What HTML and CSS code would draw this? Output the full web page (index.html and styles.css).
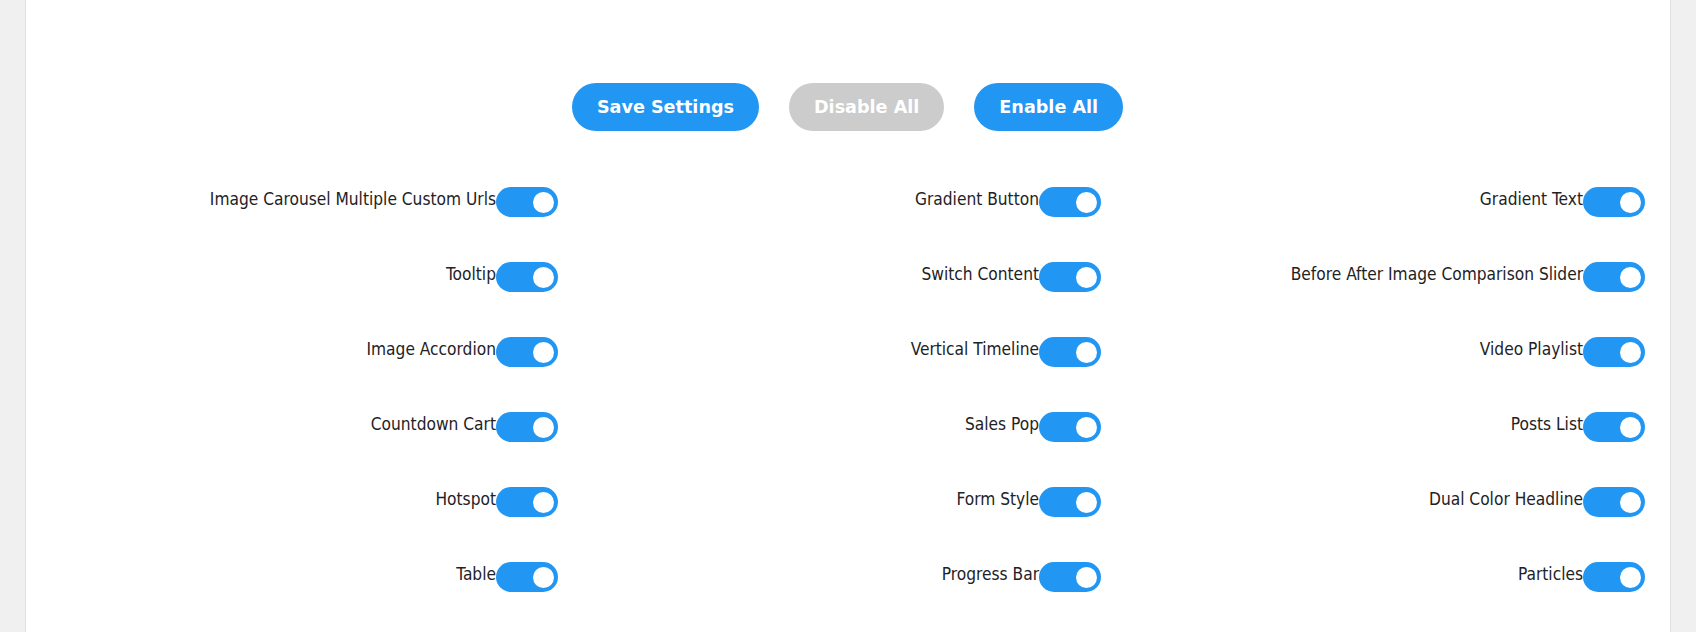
FILE: index.html
```html
<!DOCTYPE html>
<html>
<head>
<meta charset="utf-8">
<link rel="stylesheet" href="styles.css">
</head>
<body>
<div class="panel">
  <div class="actions">
    <button class="btn btn-primary">Save Settings</button>
    <button class="btn btn-disabled">Disable All</button>
    <button class="btn btn-primary">Enable All</button>
  </div>
  <div class="grid">
    <div class="item"><span class="label">Image Carousel Multiple Custom Urls</span><span class="toggle"></span></div>
    <div class="item"><span class="label">Gradient Button</span><span class="toggle"></span></div>
    <div class="item"><span class="label">Gradient Text</span><span class="toggle"></span></div>
    <div class="item"><span class="label">Tooltip</span><span class="toggle"></span></div>
    <div class="item"><span class="label">Switch Content</span><span class="toggle"></span></div>
    <div class="item"><span class="label">Before After Image Comparison Slider</span><span class="toggle"></span></div>
    <div class="item"><span class="label">Image Accordion</span><span class="toggle"></span></div>
    <div class="item"><span class="label">Vertical Timeline</span><span class="toggle"></span></div>
    <div class="item"><span class="label">Video Playlist</span><span class="toggle"></span></div>
    <div class="item"><span class="label">Countdown Cart</span><span class="toggle"></span></div>
    <div class="item"><span class="label">Sales Pop</span><span class="toggle"></span></div>
    <div class="item"><span class="label">Posts List</span><span class="toggle"></span></div>
    <div class="item"><span class="label">Hotspot</span><span class="toggle"></span></div>
    <div class="item"><span class="label">Form Style</span><span class="toggle"></span></div>
    <div class="item"><span class="label">Dual Color Headline</span><span class="toggle"></span></div>
    <div class="item"><span class="label">Table</span><span class="toggle"></span></div>
    <div class="item"><span class="label">Progress Bar</span><span class="toggle"></span></div>
    <div class="item"><span class="label">Particles</span><span class="toggle"></span></div>
  </div>
</div>
</body>
</html>
```
FILE: styles.css
```css
html, body {
  margin: 0;
  padding: 0;
  background: #f0f0f1;
  height: 100%;
  overflow: hidden;
}
body {
  font-family: "DejaVu Sans Condensed", "DejaVu Sans", sans-serif;
  color: #1e2226;
}
.panel {
  margin: 0 25px 0 25px;
  background: #fff;
  border-left: 1px solid #e2e2e2;
  border-right: 1px solid #e2e2e2;
  padding: 83px 25px 0 0;
  min-height: 700px;
}
.actions {
  display: flex;
  justify-content: center;
  gap: 30px;
  padding-left: 24px;
}
.btn {
  height: 48px;
  padding: 0 25px;
  border: none;
  border-radius: 24px;
  font-family: "DejaVu Sans", sans-serif;
  font-weight: bold;
  font-size: 17.6px;
  color: #fff;
  cursor: pointer;
}
.btn-primary { background: #2196f3; }
.btn-disabled { background: #cccccc; }
.grid {
  margin-top: 33px;
  display: grid;
  grid-template-columns: 1fr 543px 544px;
  grid-auto-rows: 75px;
}
.item {
  display: flex;
  justify-content: flex-end;
  align-items: center;
}
.label {
  font-size: 17.2px;
  padding-bottom: 5px;
  white-space: nowrap;
}
.toggle {
  position: relative;
  width: 62px;
  height: 30px;
  border-radius: 15px;
  background: #2196f3;
  flex-shrink: 0;
}
.toggle::before {
  content: "";
  position: absolute;
  width: 21px;
  height: 21px;
  right: 4px;
  top: 5px;
  border-radius: 50%;
  background: #fff;
}
```
